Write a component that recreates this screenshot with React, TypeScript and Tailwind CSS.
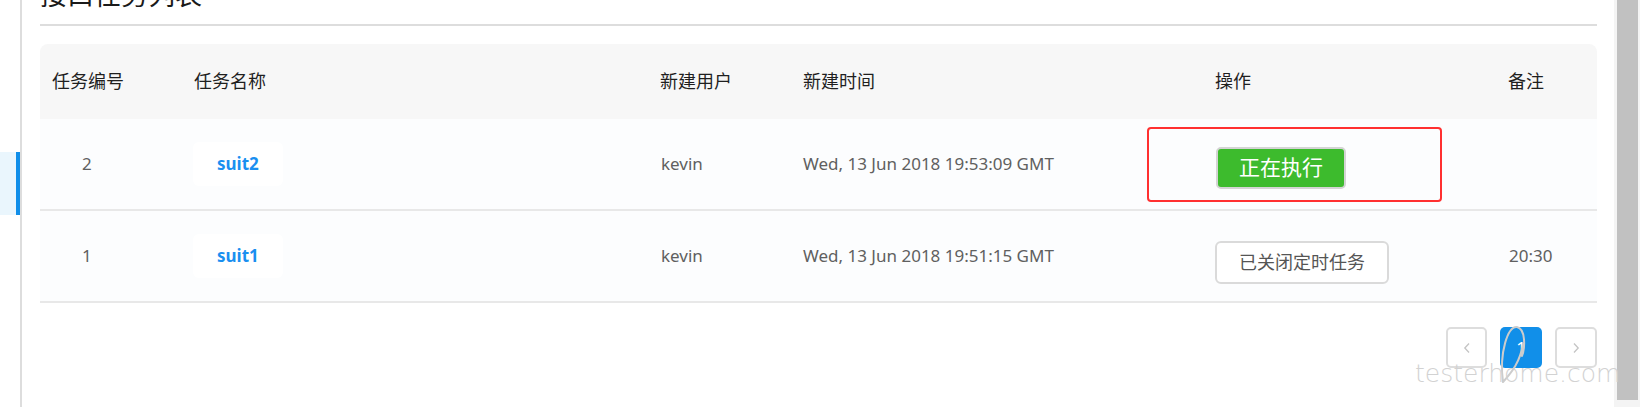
import React from "react";

const font = { fontFamily: '"Noto Sans", "Noto Sans CJK SC", sans-serif' };

const tasks = [
  { id: 2, name: "suit2", user: "kevin", time: "Wed, 13 Jun 2018 19:53:09 GMT", running: true, note: "" },
  { id: 1, name: "suit1", user: "kevin", time: "Wed, 13 Jun 2018 19:51:15 GMT", running: false, note: "20:30" },
];

const cols = "grid grid-cols-[154px_466px_143px_412px_293px_1fr]";

export default function App() {
  return (
    <div className="relative flex h-[407px] w-[1640px] overflow-hidden bg-white" style={font}>
      {/* sidebar edge */}
      <div className="w-[22px] shrink-0 border-r-2 border-[#dddddd]">
        <div className="mt-[152px] flex h-[63px]">
          <div className="w-[16px] bg-[#eaf6fd]"></div>
          <div className="w-[4px] bg-[#108ee9]"></div>
        </div>
      </div>

      <div className="flex-1 pl-[18px] pr-[17px]">
        <div className="h-[24px] overflow-hidden">
          <h1 className="-mt-[19px] text-[27px] leading-none font-normal text-[#1a1a1a]">接口任务列表</h1>
        </div>
        <div className="h-[2px] bg-[#dddddd]"></div>

        <div className="mt-[18px]">
          <div className={`${cols} h-[75px] items-center rounded-t-[8px] bg-[#f7f7f7] text-[18px] text-[#1f1f1f]`}>
            <div className="pl-[12px]">任务编号</div>
            <div>任务名称</div>
            <div>新建用户</div>
            <div>新建时间</div>
            <div>操作</div>
            <div>备注</div>
          </div>

          {tasks.map((t) => (
            <div
              key={t.id}
              className={`${cols} h-[92px] items-center border-b-2 border-[#e8e8e8] bg-[#fcfdfe] text-[17px] text-[#606060]`}
            >
              <div className="pl-[42px]">{t.id}</div>
              <div>
                <span className="-ml-px inline-flex h-[44px] items-center rounded-[6px] bg-white px-[24px] font-bold text-[#1a8ff0]">
                  {t.name}
                </span>
              </div>
              <div className="pl-px">{t.user}</div>
              <div>{t.time}</div>
              <div>
                {t.running ? (
                  <button className="ml-px mt-[8px] h-[42px] w-[130px] rounded-[5px] border-2 border-[#d4d4d4] bg-[#3dbb2d] text-[21px] text-white">
                    正在执行
                  </button>
                ) : (
                  <button className="mt-[12px] h-[43px] w-[174px] rounded-[6px] border-2 border-[#dadada] bg-white text-[18px] text-[#555555]">
                    已关闭定时任务
                  </button>
                )}
              </div>
              <div className="pl-px">{t.note}</div>
            </div>
          ))}
        </div>

        <div className="mt-[24px] flex justify-end gap-[13px]">
          <button className="flex h-[41px] w-[41px] items-center justify-center rounded-[5px] border-2 border-[#dddddd] bg-white">
            <svg width="8" height="12" viewBox="0 0 8 12" fill="none" stroke="#c4c4c4" strokeWidth="1.3">
              <path d="M6 1.5 1.8 6 6 10.5" />
            </svg>
          </button>
          <button className="flex h-[41px] w-[42px] items-center justify-center rounded-[5px] bg-[#118fe9] text-[17px] text-white">
            1
          </button>
          <button className="flex h-[41px] w-[42px] items-center justify-center rounded-[5px] border-2 border-[#dddddd] bg-white">
            <svg width="8" height="12" viewBox="0 0 8 12" fill="none" stroke="#c4c4c4" strokeWidth="1.3">
              <path d="M2 1.5 6.2 6 2 10.5" />
            </svg>
          </button>
        </div>
      </div>

      {/* scrollbar */}
      <div className="w-[26px] shrink-0 bg-[#f4f4f4] pl-[3px] pr-[2px]">
        <div className="h-[400px] bg-[#c1c1c1]"></div>
      </div>

      {/* red annotation box */}
      <div className="pointer-events-none absolute left-[1147px] top-[127px] h-[75px] w-[295px] rounded-[4px] border-2 border-[#ff3030]"></div>

      {/* watermark */}
      <svg className="pointer-events-none absolute left-0 top-0" width="1640" height="407">
        <path
          d="M1503 382 C1499 352 1508 326 1517 327 C1526 329 1525 348 1522 356 M1503 382 C1512 372 1520 362 1523 344"
          fill="none"
          stroke="#cccccc"
          strokeWidth="2"
          strokeLinecap="round"
        />
      </svg>
      <div
        className="pointer-events-none absolute left-[1415px] top-[361px] text-[25px] leading-none text-[#d2d2d2]"
        style={{ fontFamily: '"DejaVu Sans", sans-serif', fontWeight: 200 }}
      >
        testerhome.com
      </div>
    </div>
  );
}
